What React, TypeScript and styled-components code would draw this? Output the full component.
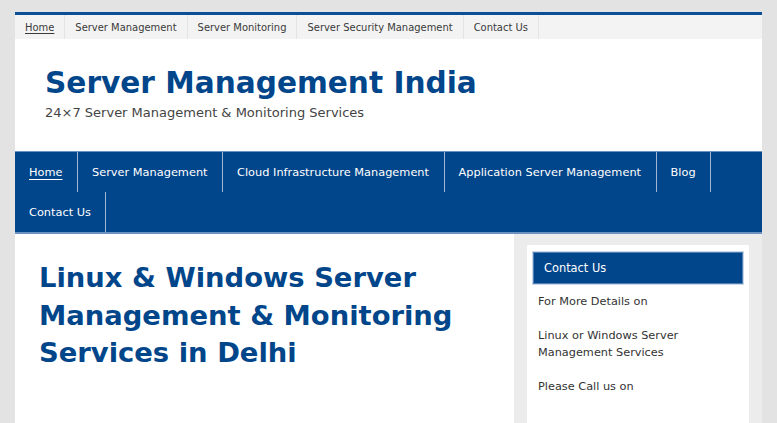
import React from "react";
import styled, { createGlobalStyle } from "styled-components";

const Global = createGlobalStyle`
  html, body { margin: 0; padding: 0; }
  body {
    background: #e3e3e3;
    font-family: "DejaVu Sans", Verdana, sans-serif;
    overflow: hidden;
  }
`;

const Page = styled.div`
  padding: 12px 15px 0 15px;
  width: 747px;
  height: 411px;
  overflow: hidden;
`;

const Wrapper = styled.div`
  border-top: 3px solid #0b4f96;
  background: #fff;
`;

const TopMenu = styled.ul`
  list-style: none;
  margin: 0;
  padding: 0;
  display: flex;
  height: 24px;
  background: #f3f3f3;
`;

const TopItem = styled.li<{ $active?: boolean }>`
  display: flex;
  align-items: center;
  padding: 0 10px;
  border-right: 1px solid #e4e4e4;
  font-size: 9.95px;
  color: #3a3a3a;
  text-decoration: ${(p) => (p.$active ? "underline" : "none")};
  text-underline-offset: 2px;
`;

const Header = styled.header`
  height: 112px;
  padding: 26px 0 0 30px;
  box-sizing: border-box;
`;

const SiteTitle = styled.h1`
  margin: 0;
  font-size: 29.6px;
  font-weight: bold;
  color: #01468a;
  line-height: 36px;
`;

const Tagline = styled.p`
  margin: 3px 0 0 0;
  font-size: 13px;
  color: #444;
  line-height: 18px;
`;

const Nav = styled.nav`
  background: #01458a;
  border-top: 1px solid #6b92bf;
  border-bottom: 2px solid #6b92bf;
  display: flex;
  flex-wrap: wrap;
`;

const NavItem = styled.a<{ $active?: boolean }>`
  display: flex;
  align-items: center;
  height: 40px;
  padding: 0 14.5px 0 14px;
  border-right: 1px solid #9fb7d4;
  color: #fff;
  font-size: 11.35px;
  text-decoration: ${(p) => (p.$active ? "underline" : "none")};
  text-underline-offset: 3px;
`;

const Body = styled.div`
  display: flex;
  height: 190px;
`;

const Main = styled.main`
  width: 475px;
  padding: 25px 0 0 24px;
  background: #fff;
`;

const PostTitle = styled.h2`
  margin: 0;
  font-size: 27.4px;
  font-weight: bold;
  color: #01468a;
  line-height: 37.5px;
`;

const Sidebar = styled.aside`
  flex: 1;
  background: #ececec;
  padding: 11px 13px 0 13px;
`;

const Widget = styled.section`
  background: #fff;
  padding: 7px 6px 0 6px;
  height: 200px;
`;

const WidgetTitle = styled.h3`
  margin: 0;
  background: #01458a;
  border: 1px solid #4f7fb5;
  box-shadow: 0 0 0 1px #c9d7e8;
  color: #fff;
  font-weight: normal;
  font-size: 11.4px;
  height: 30px;
  display: flex;
  align-items: center;
  padding-left: 10px;
`;

const WidgetText = styled.p`
  margin: 9px 0 0 5px;
  font-size: 11.3px;
  line-height: 17px;
  color: #333;
  & + & { margin-top: 17px; }
`;

export default function App() {
  const top = ["Home", "Server Management", "Server Monitoring", "Server Security Management", "Contact Us"];
  const nav = [
    "Home",
    "Server Management",
    "Cloud Infrastructure Management",
    "Application Server Management",
    "Blog",
    "Contact Us",
  ];
  return (
    <>
      <Global />
      <Page>
        <Wrapper>
          <TopMenu>
            {top.map((t, i) => (
              <TopItem key={t} $active={i === 0}>{t}</TopItem>
            ))}
          </TopMenu>
          <Header>
            <SiteTitle>Server Management India</SiteTitle>
            <Tagline>24×7 Server Management &amp; Monitoring Services</Tagline>
          </Header>
          <Nav>
            {nav.map((t, i) => (
              <NavItem key={t} $active={i === 0}>{t}</NavItem>
            ))}
          </Nav>
          <Body>
            <Main>
              <PostTitle>
                Linux &amp; Windows Server Management &amp; Monitoring Services in Delhi
              </PostTitle>
            </Main>
            <Sidebar>
              <Widget>
                <WidgetTitle>Contact Us</WidgetTitle>
                <WidgetText>For More Details on</WidgetText>
                <WidgetText>Linux or Windows Server<br />Management Services</WidgetText>
                <WidgetText>Please Call us on</WidgetText>
              </Widget>
            </Sidebar>
          </Body>
        </Wrapper>
      </Page>
    </>
  );
}
